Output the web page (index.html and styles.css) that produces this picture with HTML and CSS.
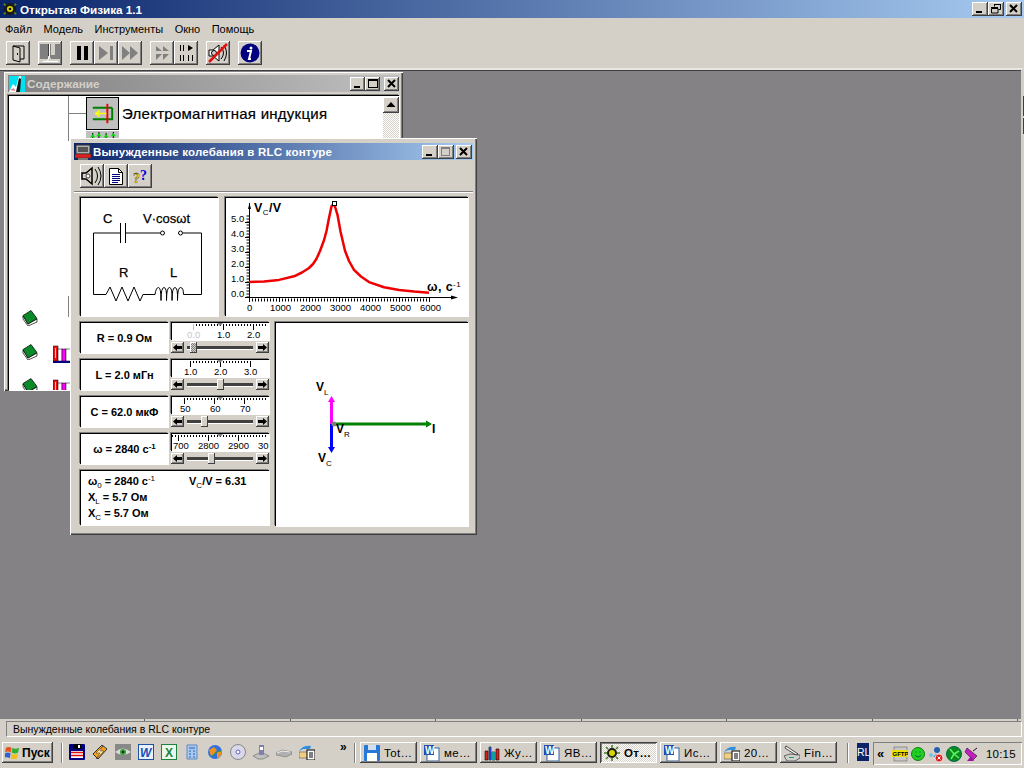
FILE: index.html
```html
<!DOCTYPE html>
<html lang="ru">
<head>
<meta charset="utf-8">
<title>Открытая Физика 1.1</title>
<link rel="stylesheet" href="styles.css">
</head>
<body>
<div class="app">
  <header class="titlebar main-title">
    <svg class="title-icon" viewBox="0 0 16 16"><circle cx="8" cy="8" r="7" fill="#1a1a1a"/><circle cx="8" cy="8" r="3.500" fill="#d8d800"/><circle cx="8" cy="8" r="1.500" fill="#111"/><path d="M1 2l2 2M15 2l-2 2M1 14l2-2M15 14l-2-2" stroke="#6a8a20" stroke-width="2"/></svg>
    <span class="title-text">Открытая Физика 1.1</span>
    <div class="caption-btns wide">
      <button class="cap"><svg viewBox="0 0 14 12"><rect x="3" y="8" width="6" height="2" fill="#000"/></svg></button>
      <button class="cap"><svg viewBox="0 0 14 12"><path d="M5.500 3.500V1.500h6v5h-2M2.500 5.500h6.500v4.500h-6.500z" fill="none" stroke="#000"/><path d="M2 4.500h7M5 1.500h7" stroke="#000" stroke-width="1"/></svg></button>
      <button class="cap gap"><svg viewBox="0 0 14 12"><path d="M3 2l7 7M10 2l-7 7" stroke="#000" stroke-width="2"/></svg></button>
    </div>
  </header>
  <nav class="menu">
    <span>Файл</span><span>Модель</span><span>Инструменты</span><span>Окно</span><span>Помощь</span>
  </nav>
  <div class="toolbar">
    <button class="tb"><svg viewBox="0 0 24 24"><path d="M7 5h11v13H14M7 5l7 2v14l-7-2z" fill="none" stroke="#000"/><rect x="11" y="12" width="1" height="2" fill="#000"/></svg></button>
    <button class="tb tb-gap"><svg viewBox="0 0 24 24"><path d="M2 3h9v11l2 4h9V3h-5v11h-4V3H2zM2 3h8v15H2z" fill="#808080"/><path d="M11.500 3v12M11.500 15l-2 5M5 20.500h15" stroke="#fff" fill="none"/><path d="M10.500 3v12" stroke="#404040"/></svg></button>
    <button class="tb tb-gap"><svg viewBox="0 0 24 24"><rect x="7" y="5" width="4" height="14" fill="#000"/><rect x="14" y="5" width="4" height="14" fill="#000"/></svg></button>
    <button class="tb"><svg viewBox="0 0 24 24"><path d="M5 5l9 7-9 7z" fill="#808080"/><rect x="16" y="5" width="3" height="14" fill="#808080"/></svg></button>
    <button class="tb"><svg viewBox="0 0 24 24"><path d="M4 5l8 7-8 7zM12 5l8 7-8 7z" fill="#808080"/></svg></button>
    <button class="tb tb-gap"><svg viewBox="0 0 24 24"><path d="M6 5l6 5-6 0zM13 5l6 5-6 0zM6 13h6l-6 6zM13 13h6l-6 6z" fill="#808080"/></svg></button>
    <button class="tb"><svg viewBox="0 0 24 24"><path d="M6.500 4v6M9.500 4v6M6.500 14v6M9.500 14v6M14.500 14v6M18.500 14v6" stroke="#000"/><path d="M14 4l5 3-5 3z" fill="#000"/></svg></button>
    <button class="tb tb-gap"><svg viewBox="0 0 24 24"><path d="M3 9h4l6-5v16l-6-5H3z" fill="#fff" stroke="#000"/><circle cx="8" cy="12" r="2.500" fill="#d4d0c8" stroke="#000"/><path d="M15 6q5 6 0 12M18 4q5 8 0 16" fill="none" stroke="#000"/><path d="M3 21L21 3" stroke="#e01010" stroke-width="2.500"/></svg></button>
    <button class="tb tb-gap"><svg viewBox="0 0 24 24"><circle cx="12" cy="12" r="9.500" fill="#000080"/><circle cx="13" cy="7" r="1.500" fill="#fff"/><path d="M9 10h4l-2 8h2" fill="none" stroke="#fff" stroke-width="2"/></svg></button>
  </div>

  <main class="desktop">
    <i class="edge-mark m1"></i>
    <i class="edge-mark m2"></i>
    <section class="window contents">
      <div class="titlebar inactive">
        <svg class="win-icon" viewBox="0 0 16 16"><rect width="16" height="16" fill="#00e0f0"/><path d="M0 16L4 8l3 3 3-11 2 0-2 16z" fill="#fff"/><path d="M7 16l3-14 2 1-1 13z" fill="#111"/><path d="M1 14l4-2 1 3z" fill="#e08090"/></svg>
        <span class="inactive-text">Содержание</span>
        <div class="caption-btns small">
          <button class="cap"><svg viewBox="0 0 14 12"><rect x="3" y="8" width="6" height="2" fill="#000"/></svg></button>
          <button class="cap"><svg viewBox="0 0 14 12"><rect x="2.500" y="1.500" width="9" height="8" fill="none" stroke="#000"/><rect x="2" y="1" width="10" height="2" fill="#000"/></svg></button>
          <button class="cap gap"><svg viewBox="0 0 14 12"><path d="M3 2l7 7M10 2l-7 7" stroke="#000" stroke-width="2"/></svg></button>
        </div>
      </div>
      <div class="contents-body">
        <i class="tree-v"></i>
        <i class="tree-h"></i>
        <i class="tree-v2"></i>
        <div class="topic-row">
          <div class="topic-icon"><svg viewBox="0 0 32 32"><path d="M26 10H6M26 10V22H6" fill="none" stroke="#008000" stroke-width="2"/><path d="M21 6v20" stroke="#f00000" stroke-width="2"/><path d="M20 16H9M13 13l-4 3 4 3" fill="none" stroke="#ffff00" stroke-width="1.500"/></svg></div>
          <span class="topic-title">Электромагнитная индукция</span>
        </div>
        <div class="topic-sub"><svg viewBox="0 0 32 8"><path d="M6.500 8V2M12.500 8V1M19.500 8V2M26.500 8V1" stroke="#000"/><path d="M4 6l2.500-3 2.500 3zM10 5l2.500-3 2.500 3zM17 6l2.500-3 2.500 3zM24 5l2.500-3 2.500 3z" fill="#00e000"/></svg></div>
        <svg class="book b1" viewBox="0 0 16 16"><path d="M1 6l5 8 9-5v3l-9 4-5-7z" fill="#fff" stroke="#000" stroke-width=".7"/><path d="M1 5.500L9 0.500l6 8-9 5.500z" fill="#0b8a2a" stroke="#000" stroke-width=".7"/></svg>
        <svg class="book b2" viewBox="0 0 16 16"><path d="M1 6l5 8 9-5v3l-9 4-5-7z" fill="#fff" stroke="#000" stroke-width=".7"/><path d="M1 5.500L9 0.500l6 8-9 5.500z" fill="#0b8a2a" stroke="#000" stroke-width=".7"/></svg>
        <svg class="book b3" viewBox="0 0 16 16"><path d="M1 6l5 8 9-5v3l-9 4-5-7z" fill="#fff" stroke="#000" stroke-width=".7"/><path d="M1 5.500L9 0.500l6 8-9 5.500z" fill="#0b8a2a" stroke="#000" stroke-width=".7"/></svg>
        <svg class="shelf s1" viewBox="0 0 18 18"><rect x="0" y="1" width="5" height="15" fill="#e81010" stroke="#000" stroke-width=".5"/><path d="M2.500 3v10" stroke="#ffe000"/><rect x="5" y="4" width="4" height="12" fill="#fff" stroke="#000" stroke-width=".5"/><rect x="9" y="4" width="4" height="12" fill="#ff00ff" stroke="#000" stroke-width=".5"/><rect x="13" y="4" width="5" height="12" fill="#fff" stroke="#000" stroke-width=".5"/><rect y="16" width="18" height="2" fill="#000080"/></svg>
        <svg class="shelf s2" viewBox="0 0 18 18"><rect x="0" y="1" width="5" height="15" fill="#e81010" stroke="#000" stroke-width=".5"/><path d="M2.500 3v10" stroke="#ffe000"/><rect x="5" y="4" width="4" height="12" fill="#fff" stroke="#000" stroke-width=".5"/><rect x="9" y="4" width="4" height="12" fill="#ff00ff" stroke="#000" stroke-width=".5"/><rect x="13" y="4" width="5" height="12" fill="#fff" stroke="#000" stroke-width=".5"/></svg>
        <div class="vscroll">
          <button class="arrow-btn up"><svg viewBox="0 0 16 16"><path d="M8 5l4.500 5h-9z" fill="#000"/></svg></button>
        </div>
      </div>
    </section>

    <section class="window dialog">
      <div class="titlebar dialog-title">
        <svg class="win-icon" viewBox="0 0 16 16"><rect x="1" y="1" width="14" height="9" fill="#b0b0b0" stroke="#333"/><rect x="3" y="3" width="10" height="5" fill="#555"/><rect x="0" y="10" width="16" height="4" fill="#e02020" stroke="#333" stroke-width=".6"/><rect x="3" y="14" width="10" height="2" fill="#777"/></svg>
        <span class="title-text dialog-text">Вынужденные колебания в RLC контуре</span>
        <div class="caption-btns dialog-caps">
          <button class="cap"><svg viewBox="0 0 14 12"><rect x="3" y="8" width="6" height="2" fill="#000"/></svg></button>
          <button class="cap"><svg viewBox="0 0 14 12"><rect x="2.500" y="1.500" width="8" height="8" fill="none" stroke="#808080"/><rect x="2" y="1" width="9" height="2" fill="#808080"/></svg></button>
          <button class="cap gap"><svg viewBox="0 0 14 12"><path d="M3 2l7 7M10 2l-7 7" stroke="#000" stroke-width="2"/></svg></button>
        </div>
      </div>
      <div class="dialog-tools">
        <button class="tb"><svg viewBox="0 0 24 24"><path d="M2 9h4l6-5v16l-6-5H2z" fill="#d4d0c8" stroke="#000" stroke-width="1.500"/><circle cx="8" cy="12" r="2" fill="#fff" stroke="#000" stroke-width=".7"/><path d="M15 5q5 7 0 14M18 3q6 9 0 18" fill="none" stroke="#000"/></svg></button>
        <button class="tb"><svg viewBox="0 0 24 24"><path d="M5.500 4.500h9l4 4v12h-13z" fill="#fff" stroke="#000"/><path d="M14.500 4.500v4h4" fill="none" stroke="#000"/><path d="M8 10.500h8M8 12.500h8M8 14.500h8M8 16.500h8M8 18.500h6" stroke="#000080"/></svg></button>
        <button class="tb"><svg viewBox="0 0 24 24"><text class="qm qm-y" x="5" y="19">?</text><text class="qm qm-b" x="12" y="16">?</text></svg></button>
      </div>
      <div class="dialog-rule"></div>
      <div class="dialog-body">
        <div class="row-top">
          <div class="panel circuit">
            <svg viewBox="81 198 137 118">
              <g fill="none" stroke="#000">
                <path d="M120.500 233H93.500V294.500H106L110 287 116 301 122 287 128 301 134 287 140 301 143 294.500H155"/>
                <path d="M155 294.500q1-7 3.500-7t2.500 13q0-13 3-13t2.500 13q0-13 3-13t2.500 13q0-13 3-13t2.500 13q0-13 3-13 3 0 3 7H201.500V233H183"/>
                <path d="M125.500 233H160"/>
                <circle cx="162.500" cy="233" r="2"/><circle cx="180.500" cy="233" r="2"/>
                <path d="M120.500 223V243M125.500 223V243"/>
              </g>
              <text class="c-lab" x="103" y="223">C</text>
              <text class="c-lab" x="143" y="223">V·cosωt</text>
              <text class="c-lab" x="119" y="277">R</text>
              <text class="c-lab" x="170" y="277">L</text>
            </svg>
          </div>
          <div class="panel graph">
            <svg viewBox="226 198 242 118">
              <path d="M249.500 298V203M249 297.500H455" stroke="#000" fill="none"/>
              <path d="M251 209l-1.500-6-1.500 6zM458 297.500l-7-2v4z" fill="#000"/>
              <path class="minor" d="M249 300H430"/>
              <path d="M249.500 297v5M279.500 297v5M309.500 297v5M339.500 297v5M369.500 297v5M399.500 297v5M429.500 297v5M245 297.500h4M245 282.500h4M245 267.500h4M245 252.500h4M245 237.500h4M245 222.500h4" stroke="#000" fill="none"/>
              <path class="minor" d="M248 297.500V215"/>
              <polyline class="curve" points="249,282 264,281.500 279,279.900 294,276.300 302,272.500 309,268 313,264 316.500,258.800 320,251 324,240.300 326.500,231 328.500,220.500 331.500,206.300 334.200,204 337.500,214.800 340.500,231.500 345,250.700 349,261 354,269.900 361,276.500 369,282.100 384,287.200 399,289.900 414,291.600 429,292.700"/>
              <rect class="peak" x="332.500" y="201.500" width="4" height="4"/>
              <g class="g-lab">
                <text x="231" y="222">5.0</text><text x="231" y="237">4.0</text><text x="231" y="252">3.0</text><text x="231" y="267">2.0</text><text x="231" y="282">1.0</text><text x="231" y="297">0.0</text>
                <text x="247" y="311">0</text><text x="270" y="311">1000</text><text x="300" y="311">2000</text><text x="330" y="311">3000</text><text x="360" y="311">4000</text><text x="390" y="311">5000</text><text x="420" y="311">6000</text>
              </g>
              <text class="g-big" x="254" y="212">V<tspan class="g-sub" dy="3">C</tspan><tspan dy="-3">/V</tspan></text>
              <text class="g-big" x="427" y="291">ω, c<tspan class="g-sub" dy="-4">-1</tspan></text>
            </svg>
          </div>
        </div>
        <div class="row-bottom">
          <div class="controls">
            <div class="ctl-row">
              <div class="panel value">R = 0.9 Ом</div>
              <div class="ctl">
                <div class="panel ruler"><svg viewBox="172 323 97 17">
                  <path class="minor r-minor" d="M193 325H268"/><path d="M193.500 324V330" stroke="#c0c0c0"/><path d="M223.500 324V330M253.500 324V330" stroke="#000"/>
                  <path d="M217 323h6l-3 3z" fill="#808080"/>
                  <text class="r-lab dim" x="187" y="338">0.0</text><text class="r-lab" x="217" y="338">1.0</text><text class="r-lab" x="247" y="338">2.0</text>
                </svg></div>
                <div class="sbar"><button class="arrow-btn"><svg viewBox="0 0 13 11"><path d="M2 5.500l4-3.500v2h5v3H6v2z" fill="#000"/></svg></button><div class="track"><i class="thumb focus" style="left:6px"></i></div><button class="arrow-btn"><svg viewBox="0 0 13 11"><path d="M11 5.500L7 2v2H2v3h5v2z" fill="#000"/></svg></button></div>
              </div>
            </div>
            <div class="ctl-row">
              <div class="panel value">L = 2.0 мГн</div>
              <div class="ctl">
                <div class="panel ruler"><svg viewBox="172 323 97 17">
                  <path class="minor r-minor" d="M190 325H250"/><path d="M190.500 324V330M220.500 324V330M250.500 324V330" stroke="#000"/>
                  <path d="M217 323h6l-3 3z" fill="#808080"/>
                  <text class="r-lab" x="184" y="338">1.0</text><text class="r-lab" x="214" y="338">2.0</text><text class="r-lab" x="244" y="338">3.0</text>
                </svg></div>
                <div class="sbar"><button class="arrow-btn"><svg viewBox="0 0 13 11"><path d="M2 5.500l4-3.500v2h5v3H6v2z" fill="#000"/></svg></button><div class="track"><i class="thumb" style="left:33px"></i></div><button class="arrow-btn"><svg viewBox="0 0 13 11"><path d="M11 5.500L7 2v2H2v3h5v2z" fill="#000"/></svg></button></div>
              </div>
            </div>
            <div class="ctl-row">
              <div class="panel value">C = 62.0 мкФ</div>
              <div class="ctl">
                <div class="panel ruler"><svg viewBox="172 323 97 17">
                  <path class="minor r-minor" d="M184 325H268"/><path d="M184.500 324V330M214.500 324V330M244.500 324V330" stroke="#000"/>
                  <path d="M217 323h6l-3 3z" fill="#808080"/>
                  <text class="r-lab" x="180" y="338">50</text><text class="r-lab" x="210" y="338">60</text><text class="r-lab" x="240" y="338">70</text>
                </svg></div>
                <div class="sbar"><button class="arrow-btn"><svg viewBox="0 0 13 11"><path d="M2 5.500l4-3.500v2h5v3H6v2z" fill="#000"/></svg></button><div class="track"><i class="thumb" style="left:17px"></i></div><button class="arrow-btn"><svg viewBox="0 0 13 11"><path d="M11 5.500L7 2v2H2v3h5v2z" fill="#000"/></svg></button></div>
              </div>
            </div>
            <div class="ctl-row">
              <div class="panel value"><span>ω = 2840 c<sup>-1</sup></span></div>
              <div class="ctl">
                <div class="panel ruler"><svg viewBox="172 323 97 17">
                  <path class="minor r-minor" d="M172 325H268"/><path d="M178.500 324V330M208.500 324V330M238.500 324V330" stroke="#000"/>
                  <path d="M217 323h6l-3 3z" fill="#808080"/>
                  <text class="r-lab" x="173" y="338">700</text><text class="r-lab" x="198" y="338">2800</text><text class="r-lab" x="228" y="338">2900</text><text class="r-lab" x="258" y="338">30</text>
                </svg></div>
                <div class="sbar"><button class="arrow-btn"><svg viewBox="0 0 13 11"><path d="M2 5.500l4-3.500v2h5v3H6v2z" fill="#000"/></svg></button><div class="track"><i class="thumb" style="left:24px"></i></div><button class="arrow-btn"><svg viewBox="0 0 13 11"><path d="M11 5.500L7 2v2H2v3h5v2z" fill="#000"/></svg></button></div>
              </div>
            </div>
            <div class="panel info">
              <div class="info-line info-split"><span class="info-a">ω<sub>0</sub> = 2840 c<sup>-1</sup></span><span>V<sub>C</sub>/V = 6.31</span></div>
              <div class="info-line">X<sub>L</sub> = 5.7 Ом</div>
              <div class="info-line">X<sub>C</sub> = 5.7 Ом</div>
            </div>
          </div>
          <div class="panel vectors">
            <svg viewBox="276 323 192 203">
              <path d="M331.500 424V400" stroke="#ff00ff" stroke-width="3"/><path d="M331.500 396l-3.500 6h7z" fill="#ff00ff"/>
              <path d="M331.500 424V449" stroke="#0000ff" stroke-width="3"/><path d="M331.500 453l-3.500-6h7z" fill="#0000ff"/>
              <path d="M333 424H428" stroke="#008000" stroke-width="3"/><path d="M432 424l-6-3.500v7z" fill="#008000"/>
              <circle cx="334" cy="424" r="2.500" fill="#808080"/>
              <text class="v-lab" x="316" y="391">V<tspan class="v-sub" dy="4">L</tspan></text>
              <text class="v-lab" x="336" y="433">V<tspan class="v-sub" dy="4">R</tspan></text>
              <text class="v-lab" x="318" y="462">V<tspan class="v-sub" dy="4">C</tspan></text>
              <text class="v-lab" x="432" y="433">I</text>
            </svg>
          </div>
        </div>
      </div>
    </section>
  </main>

  <div class="edge-rule"></div>
  <div class="statusbar"><span>Вынужденные колебания в RLC контуре</span></div>

  <footer class="taskbar">
    <button class="start"><svg viewBox="0 0 16 16"><path d="M1 3q3-2 6 0l-1 5q-3-2-6 0z" fill="#e85020"/><path d="M8 3q3 2 7 0l-1 5q-3 2-7 0z" fill="#30b030"/><path d="M0 9q3-2 6 0l-1 5q-3-2-6 0z" fill="#3060d8"/><path d="M7 9q3 2 7 0l-1 5q-3 2-7 0z" fill="#f0c020"/></svg><span>Пуск</span></button>
    <i class="tsep first"></i>
    <div class="quick">
      <svg viewBox="0 0 16 16"><rect width="16" height="16" rx="1" fill="#000080"/><rect x="2" y="7" width="12" height="7" fill="#fff"/><path d="M2 8.500h12M2 11.500h12" stroke="#e01010" stroke-width="1.500"/><rect x="4" y="0" width="8" height="5" fill="#000"/><rect x="9" y="1" width="2" height="3" fill="#fff"/></svg>
      <svg viewBox="0 0 16 16"><path d="M1 10L10 1l5 4-9 10z" fill="#f4a020" stroke="#333"/><path d="M11 2L4 9h4l-4 6 8-8H8z" fill="#fff0a0" stroke="#333" stroke-width=".5"/></svg>
      <svg viewBox="0 0 16 16"><rect width="16" height="16" fill="#888"/><path d="M0 8q8-7 16 0-8 6-16 0z" fill="#d8d8d8"/><circle cx="8" cy="8" r="3" fill="#30a030"/><circle cx="8" cy="8" r="1" fill="#000"/></svg>
      <svg viewBox="0 0 16 16"><rect x=".5" y=".5" width="15" height="15" fill="#e8f0ff" stroke="#2050a0"/><text class="q-letter w" x="2" y="13">W</text></svg>
      <svg viewBox="0 0 16 16"><rect x=".5" y=".5" width="15" height="15" fill="#e8f8e8" stroke="#208040"/><text class="q-letter x" x="4" y="13">X</text></svg>
      <svg viewBox="0 0 16 16"><path d="M3 1h10v14H3z" fill="#a8c8f0" stroke="#6088c0"/><path d="M5 4h6M5 7h2M9 7h2M5 10h2M9 10h2M5 13h2M9 13h2" stroke="#3060b0"/></svg>
      <svg viewBox="0 0 16 16"><circle cx="8" cy="8" r="7" fill="#3070e0"/><path d="M2 6l5-3 3 3-3 4-3 2zM10 8l5-1-2 6-3 1z" fill="#f09020"/><path d="M5 12l5-4 4-1" stroke="#30a030" fill="none"/></svg>
      <svg viewBox="0 0 16 16"><circle cx="8" cy="8" r="7.500" fill="#d8d8e8" stroke="#888"/><circle cx="8" cy="8" r="2" fill="#fff" stroke="#6060c0"/></svg>
      <svg viewBox="0 0 16 16"><path d="M0 12l6-3h4l6 3-6 3H5z" fill="#c0c0c0" stroke="#666" stroke-width=".6"/><rect x="6" y="1" width="5" height="10" fill="#8080b0"/><rect x="7" y="3" width="3" height="3" fill="#fff"/></svg>
      <svg viewBox="0 0 16 16"><path d="M0 9l6-3 10 2v2l-6 3L0 11z" fill="#b0b0b0" stroke="#777" stroke-width=".6"/><path d="M1 9l5-2 8 1" fill="none" stroke="#eee"/></svg>
      <svg viewBox="0 0 16 16"><path d="M0 7q4-6 12-5l-1 3H4z" fill="#3090e0"/><path d="M0 8h10v6H0z" fill="#f0d080" stroke="#555" stroke-width=".6"/><rect x="8" y="6" width="8" height="10" fill="#fff" stroke="#000"/><path d="M10 9h4M10 11h4M10 13h4" stroke="#000"/></svg>
    </div>
    <span class="chev">»</span>
    <i class="tsep mid"></i>
    <div class="tasks">
      <button class="task"><svg viewBox="0 0 16 16"><rect width="16" height="16" rx="1" fill="#2878d8"/><rect x="3" y="8" width="10" height="8" fill="#fff"/><rect x="4" y="0" width="8" height="5" fill="#d0e0f0"/></svg><span>Tot…</span></button>
      <button class="task"><svg viewBox="0 0 16 16"><rect x="3" y="3" width="12" height="13" fill="#fff" stroke="#3060a0"/><rect x="0" y="0" width="10" height="10" fill="#2050b0"/><text class="q-letter wt" x="1" y="9">W</text></svg><span>ме…</span></button>
      <button class="task"><svg viewBox="0 0 16 16"><path d="M1 15V6h3v9zM5 15V2h2v13zM8 15V7h3v8zM12 15V4h3v11z" fill="#e02020" stroke="#000" stroke-width=".6"/><path d="M5 15V2h2v13z" fill="#2040c0"/><path d="M8 15V7h3v8z" fill="#10a0a0"/></svg><span>Жу…</span></button>
      <button class="task"><svg viewBox="0 0 16 16"><rect x="3" y="3" width="12" height="13" fill="#fff" stroke="#3060a0"/><rect x="0" y="0" width="10" height="10" fill="#2050b0"/><text class="q-letter wt" x="1" y="9">W</text></svg><span>ЯВ…</span></button>
      <button class="task active"><svg viewBox="0 0 16 16"><circle cx="8" cy="8" r="5" fill="#1a1a1a"/><circle cx="8" cy="8" r="3" fill="#d8d800"/><path d="M8 0v3M8 13v3M0 8h3M13 8h3M2 2l2 2M14 2l-2 2M2 14l2-2M14 14l-2-2" stroke="#408020" stroke-width="1.500"/></svg><span>От…</span></button>
      <button class="task"><svg viewBox="0 0 16 16"><rect x="3" y="3" width="12" height="13" fill="#fff" stroke="#3060a0"/><rect x="0" y="0" width="10" height="10" fill="#2050b0"/><text class="q-letter wt" x="1" y="9">W</text></svg><span>Ис…</span></button>
      <button class="task"><svg viewBox="0 0 16 16"><path d="M0 7q4-6 12-5l-1 3H4z" fill="#3090e0"/><path d="M0 8h10v6H0z" fill="#f0d080" stroke="#555" stroke-width=".6"/><rect x="8" y="6" width="8" height="10" fill="#fff" stroke="#000"/><path d="M10 9h4M10 11h4M10 13h4" stroke="#000"/></svg><span>20…</span></button>
      <button class="task"><svg viewBox="0 0 16 16"><path d="M0 11l6-2 10 1v3l-5 3H3z" fill="#d0d0d0" stroke="#333" stroke-width=".7"/><path d="M2 1l12 8-2 1L1 3z" fill="#fff" stroke="#000" stroke-width=".7"/><rect x="5" y="12" width="5" height="1" fill="#20a040"/></svg><span>Fin…</span></button>
    </div>
    <i class="tsep second"></i>
    <span class="lang">RL</span>
    <div class="tray">
      <span class="tray-chev">«</span>
      <svg viewBox="0 0 16 16"><rect x="2" y="1" width="13" height="14" fill="#c8c8c8" stroke="#666" stroke-width=".6"/><rect x="0" y="4" width="16" height="7" fill="#f0e000"/><text class="ftp" x="0.500" y="10">GFTP</text></svg>
      <svg viewBox="0 0 16 16"><circle cx="8" cy="8" r="6.500" fill="#20d020" stroke="#108010"/><path d="M5 9.500q3 3 6 0M5.500 6h1M9.500 6h1" stroke="#064" fill="none"/></svg>
      <svg viewBox="0 0 16 16"><circle cx="9" cy="4" r="3" fill="#2060b0"/><path d="M5 11q4-6 8 0z" fill="#40a0d0"/><circle cx="3" cy="9" r="2" fill="#80c0e0"/><circle cx="11" cy="12" r="4" fill="#e02020" stroke="#fff" stroke-width=".7"/><path d="M9.500 10.500l3 3M12.500 10.500l-3 3" stroke="#fff"/></svg>
      <svg viewBox="0 0 16 16"><circle cx="8" cy="8" r="7.500" fill="#0a8a20" stroke="#064"/><path d="M8 8L4 3M8 8l5-3M8 8l-3 5M8 8l5 4" stroke="#60f060" stroke-width="1.500"/></svg>
      <svg viewBox="0 0 16 16"><path d="M3 2l10 8-4 4-8-8z" fill="#c020c0" stroke="#303" stroke-width=".6"/><path d="M3 15l4-5 3 5z" fill="#a010a0"/><path d="M9 5l4-3" stroke="#303"/></svg>
      <span class="clock">10:15</span>
    </div>
  </footer>
</div>
</body>
</html>
```

FILE: styles.css
```css
* { box-sizing: border-box; }
html, body { margin: 0; padding: 0; height: 100%; overflow: hidden; }
body { background: #d4d0c8; font-family: "Liberation Sans", Arial, sans-serif; font-size: 11px; color: #000; }
button { margin: 0; padding: 0; border: 0; font: inherit; color: inherit; background: #d4d0c8; display: block; }
svg { display: block; }

.app { width: 1024px; height: 768px; display: flex; flex-direction: column; }

.titlebar { display: flex; align-items: center; background: linear-gradient(90deg, #0a246a, #a6caf0); color: #fff; }
.main-title { height: 18px; padding: 0 2px 0 3px; margin-bottom: 2px; }
.title-icon { width: 14px; height: 14px; margin-right: 3px; }
.title-text { font-weight: bold; font-size: 11.700px; }
.win-icon { width: 16px; height: 16px; margin-right: 2px; }

.caption-btns { margin-left: auto; display: flex; }
.cap { width: 16px; height: 14px; box-shadow: inset -1px -1px #404040, inset 1px 1px #fff, inset -2px -2px #808080; display: flex; align-items: center; justify-content: center; }
.cap svg { width: 14px; height: 12px; }
.cap.gap { margin-left: 2px; }

.menu { height: 18px; display: flex; align-items: center; gap: 11.500px; padding-left: 5px; font-size: 11px; }

.toolbar { height: 30px; display: flex; align-items: flex-start; padding: 3px 0 0 6px; }
.tb { width: 24px; height: 24px; box-shadow: inset -1px -1px #404040, inset 1px 1px #fff, inset -2px -2px #808080; flex: none; }
.tb svg { width: 24px; height: 24px; }
.tb-gap { margin-left: 8px; }

.desktop { position: relative; flex: 1; background: #858285; border-top: 2px solid #e8e6e0; border-right: 3px solid #d4d0c8; box-shadow: inset 0 1px #404040; }
.edge-mark { position: absolute; left: 1023px; width: 1px; background: #404040; }
.m1 { top: 26px; height: 20px; }
.m2 { top: 48px; height: 16px; }

.window { position: absolute; background: #d4d0c8; box-shadow: inset 1px 1px #fff, inset -1px -1px #404040, inset -2px -2px #808080; }
.contents { left: 4px; top: 2px; width: 399px; height: 319px; padding: 3px 4px 4px; }
.inactive { height: 17px; background: linear-gradient(90deg, #808080, #c0c0c0); padding: 0 0 0 1px; }
.inactive-text { font-weight: bold; font-size: 11.800px; color: #d4d0c8; }
.small .cap { width: 15px; }
.small .cap.gap { margin-left: 4px; }
.contents-body { position: relative; height: 295px; margin-top: 3px; background: #fff; border-top: 1px solid #000; border-left: 1px solid #000; box-shadow: -1px -1px #808080, 1px 1px #fff; overflow: hidden; }
.topic-row { position: absolute; left: 77px; top: 1px; display: flex; align-items: center; gap: 3px; height: 32px; }
.topic-icon { width: 33px; height: 33px; background: #c0c0c0; border: 1px solid #000; flex: none; }
.topic-icon svg { width: 31px; height: 31px; }
.topic-title { font-size: 15px; letter-spacing: .26px; -webkit-text-stroke: .2px #000; }
.topic-sub { position: absolute; left: 77px; top: 35px; width: 33px; height: 8px; background: #c0c0c0; }
.tree-v { position: absolute; left: 59px; top: 0; width: 1px; height: 45px; background: #808080; }
.tree-h { position: absolute; left: 59px; top: 17px; width: 18px; height: 1px; background: #808080; }
.tree-v2 { position: absolute; left: 59px; top: 200px; width: 1px; height: 21px; background: #808080; }
.book { position: absolute; width: 16px; height: 16px; left: 13px; }
.b1 { top: 214px; } .b2 { top: 248px; } .b3 { top: 282px; }
.shelf { position: absolute; width: 18px; height: 18px; left: 44px; }
.s1 { top: 249px; } .s2 { top: 283px; }
.vscroll { position: absolute; right: 0; top: 1px; bottom: 0; width: 16px; background: repeating-conic-gradient(#fff 0 25%, #d4d0c8 0 50%) 0 0 / 2px 2px; }
.up { width: 16px; height: 16px; }
.arrow-btn { box-shadow: inset -1px -1px #404040, inset 1px 1px #fff, inset -2px -2px #808080; flex: none; }
.arrow-btn svg { width: 100%; height: 100%; }

.dialog { left: 70px; top: 68px; width: 407px; height: 397px; padding: 5px 4px 4px; }
.dialog-title { height: 17px; padding-left: 1px; }
.dialog-text { font-size: 11.500px; letter-spacing: .2px; }
.dialog-caps { margin-right: 1px; }
.dialog-tools { display: flex; height: 31px; padding: 4px 0 0 6px; }
.dialog-rule { height: 2px; background: #fff; border-top: 1px solid #808080; margin: 0 0 4px; }
.dialog-body { padding: 0 0 0 6px; display: flex; flex-direction: column; gap: 6px; }
.row-top { display: flex; gap: 7px; height: 119px; }
.row-bottom { display: flex; gap: 6px; height: 204px; }

.panel { background: #fff; border-top: 1px solid #000; border-left: 1px solid #000; box-shadow: -1px -1px #808080, 1px 1px #fff; }
.circuit { width: 138px; }
.graph { width: 243px; }
.circuit svg, .graph svg, .vectors svg { width: 100%; height: 100%; }

.c-lab { font-size: 13px; fill: #000; stroke: #000; stroke-width: .25px; }
.g-lab text { font-size: 9.500px; }
.g-big { font-size: 12.500px; font-weight: bold; letter-spacing: .4px; }
.g-sub { font-size: 8px; font-weight: normal; }
.minor { stroke: #000; stroke-width: 3px; stroke-dasharray: 1 2; fill: none; }
.r-minor { stroke-width: 2px; }
.curve { fill: none; stroke: #f00000; stroke-width: 2.500px; stroke-linejoin: round; }
.peak { fill: #fff; stroke: #000; }

.controls { width: 189px; display: flex; flex-direction: column; gap: 6px; }
.ctl-row { display: flex; gap: 3px; height: 31px; }
.value { width: 88px; display: flex; align-items: center; justify-content: center; font-weight: bold; font-size: 11px; }
.value sup { font-size: 8px; line-height: 0; vertical-align: 4px; }
.ctl { width: 98px; display: flex; flex-direction: column; gap: 2px; }
.ruler { height: 18px; }
.ruler svg { width: 97px; height: 17px; overflow: hidden; }
.r-lab { font-size: 9.500px; }
.dim { fill: #c8c8c8; }
.sbar { display: flex; height: 11px; }
.sbar .arrow-btn { width: 13px; height: 11px; }
.track { position: relative; flex: 1; }
.track::before { content: ""; position: absolute; left: 3px; right: 3px; top: 4px; height: 3px; background: #404040; border-bottom: 1px solid #fff; }
.thumb { position: absolute; top: 0; width: 7px; height: 11px; background: #d4d0c8; box-shadow: inset -1px -1px #404040, inset 1px 1px #fff; }
.thumb.focus { background: repeating-conic-gradient(#808080 0 25%, #d4d0c8 0 50%) 0 0 / 2px 2px; }

.info { height: 55px; padding: 2px 0 0 7px; font-weight: bold; font-size: 11px; line-height: 16px; }
.info-line { height: 16px; white-space: pre; }
.info-split { display: flex; }
.info-line sub { font-size: 8px; font-weight: normal; line-height: 0; vertical-align: -3px; }
.info-line sup { font-size: 8px; font-weight: normal; line-height: 0; vertical-align: 4px; }
.info-a { width: 101px; }
.vectors { width: 193px; height: 204px; }
.v-lab { font-size: 12px; font-weight: bold; }
.v-sub { font-size: 8px; font-weight: normal; }

.qm { font-size: 14px; font-weight: bold; font-family: "Liberation Serif", serif; }
.qm-y { fill: #f0e000; stroke: #000; stroke-width: .3px; }
.qm-b { fill: #0000e0; }

.edge-rule { height: 3px; margin-top: -1px; background: #d4d0c8 repeating-linear-gradient(90deg, transparent 0 144.500px, #606060 144.500px 145.500px); border-top: 1px solid #d4d0c8; }
.statusbar { height: 16px; margin: 0 2px 0 6px; padding-left: 6px; display: flex; align-items: center; border: 1px solid #808080; border-right-color: #fff; border-bottom-color: #fff; font-size: 10.500px; flex: none; }

.taskbar { height: 31px; flex: none; display: flex; align-items: flex-start; padding: 5px 0 0 2px; position: relative; }
.start { width: 51px; height: 21px; display: flex; align-items: center; gap: 2px; padding-left: 3px; font-weight: bold; font-size: 12px; box-shadow: inset -1px -1px #404040, inset 1px 1px #fff, inset -2px -2px #808080; flex: none; }
.start svg { width: 15px; height: 15px; }
.tsep { width: 2px; height: 20px; background: #fff; border-left: 1px solid #808080; margin: 1px 0 0 7px; flex: none; }
.first { margin-left: 8px; }
.mid { margin-left: 6px; }
.quick { display: flex; gap: 7px; width: 271px; margin: 2px 0 0 6px; flex: none; }
.quick svg { width: 16px; height: 16px; flex: none; }
.chev { width: 8px; font-weight: bold; font-size: 12px; line-height: 11px; flex: none; }
.tasks { display: flex; gap: 3px; margin-left: 4px; flex: none; }
.task { width: 57px; height: 21px; display: flex; align-items: center; gap: 4px; padding-left: 4px; box-shadow: inset -1px -1px #404040, inset 1px 1px #fff, inset -2px -2px #808080; font-size: 11.500px; letter-spacing: .4px; }
.task svg { width: 16px; height: 16px; flex: none; }
.task.active { font-weight: bold; box-shadow: inset 1px 1px #404040, inset -1px -1px #fff, inset 2px 2px #808080; background: repeating-conic-gradient(#fff 0 25%, #d4d0c8 0 50%) 0 0 / 2px 2px; }
.second { margin-left: 10px; }
.lang { width: 12px; height: 18px; margin: 1px 0 0 8px; background: #0a246a; color: #fff; font-size: 10.500px; line-height: 18px; text-align: center; flex: none; overflow: hidden; }
.tray { position: absolute; left: 873px; top: 5px; width: 149px; height: 23px; display: flex; align-items: center; padding-left: 4px; box-shadow: inset 1px 1px #808080, inset -1px -1px #fff; }
.tray svg { width: 16px; height: 16px; margin-right: 2px; flex: none; }
.tray-chev { font-weight: bold; font-size: 13px; width: 15px; line-height: 14px; }
.clock { margin-left: 4px; font-size: 11.500px; letter-spacing: .2px; }

.q-letter { font-weight: bold; font-size: 12px; }
.w { fill: #2050b0; font-style: italic; }
.x { fill: #208040; }
.wt { fill: #fff; font-size: 10px; }
.ftp { font-size: 6px; font-weight: bold; fill: #000; }
```
